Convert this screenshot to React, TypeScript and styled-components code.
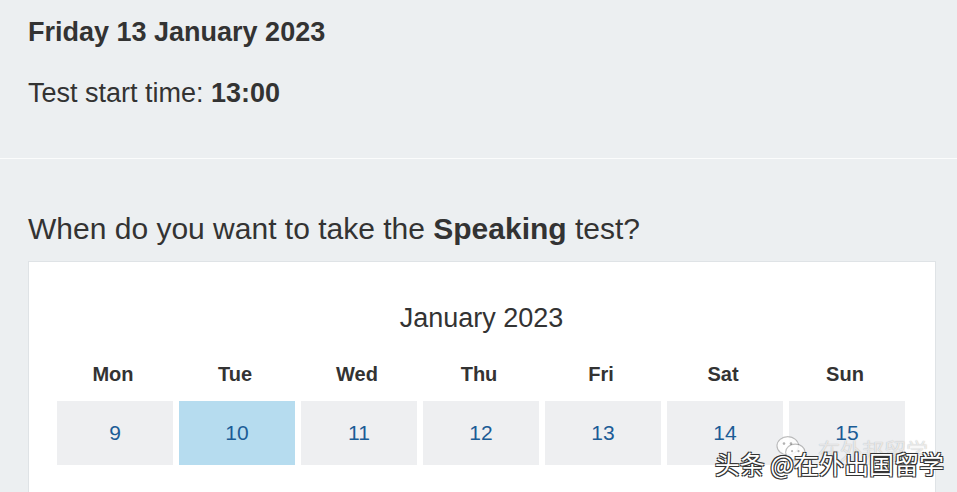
import React from "react";
import styled, { createGlobalStyle } from "styled-components";

const days = ["Mon", "Tue", "Wed", "Thu", "Fri", "Sat", "Sun"];
const dates = [9, 10, 11, 12, 13, 14, 15];
const selectedDate = 10;

const GlobalStyle = createGlobalStyle`
  html, body {
    margin: 0;
    padding: 0;
    background: #eceff1;
    font-family: "Liberation Sans", Arial, sans-serif;
    color: #333;
  }
`;

const Page = styled.div`
  position: relative;
  width: 957px;
  height: 492px;
  overflow: hidden;
  background: #eceff1;
`;

const Summary = styled.section`
  padding: 16px 28px 0;
  height: 142px;
  border-bottom: 1px solid #fbfcfc;
`;

const DateTitle = styled.h2`
  margin: 0;
  font-size: 27px;
  font-weight: bold;
  line-height: 32px;
`;

const StartTime = styled.p`
  margin: 29px 0 0;
  font-size: 27px;
  line-height: 32px;
`;

const Question = styled.h3`
  margin: 52px 28px 0;
  font-size: 30px;
  font-weight: normal;
  line-height: 36px;
`;

const CalendarCard = styled.div`
  margin: 14px 21px 0 28px;
  background: #fff;
  border: 1px solid #dfe3e6;
  padding: 40px 29px 40px 28px;
`;

const MonthTitle = styled.div`
  text-align: center;
  font-size: 27px;
  line-height: 32px;
  color: #333;
`;

const Grid = styled.div`
  display: grid;
  grid-template-columns: repeat(7, 116px);
  column-gap: 6px;
  margin-top: 26px;
`;

const DayHead = styled.div`
  text-align: center;
  font-weight: bold;
  font-size: 20px;
  line-height: 28px;
  padding: 0 4px 13px 0;
`;

const DateCell = styled.button<{ $selected?: boolean }>`
  height: 64px;
  border: none;
  padding: 0;
  background: ${(p) => (p.$selected ? "#b6dcef" : "#eeeff1")};
  color: #1b5c96;
  font-family: inherit;
  font-size: 21px;
  cursor: pointer;
`;

const Watermark = styled.div`
  position: absolute;
  right: 13px;
  bottom: 13px;
  display: flex;
  flex-direction: column;
  align-items: flex-end;
  pointer-events: none;
  font-family: "Noto Sans CJK SC", sans-serif;
`;

const WatermarkTop = styled.div`
  display: flex;
  align-items: center;
  gap: 10px;
  margin-right: 16px;
  margin-bottom: -18px;
  color: rgba(255, 255, 255, 0.7);
  font-size: 22px;
  text-shadow: 0 0 1px rgba(0, 0, 0, 0.3);
`;

const WatermarkMain = styled.div`
  color: #fff;
  font-size: 25px;
  line-height: 32px;
  text-shadow: -1px -1px 0 #333, 1px -1px 0 #333, -1px 1px 0 #333, 1px 1px 0 #333;
`;

const WeChatIcon = () => (
  <svg width="34" height="28" viewBox="0 0 30 26">
    <ellipse cx="12" cy="10" rx="10" ry="8.5" fill="rgba(255,255,255,0.8)" stroke="rgba(0,0,0,0.25)" />
    <ellipse cx="19" cy="16" rx="9" ry="7.5" fill="rgba(255,255,255,0.85)" stroke="rgba(0,0,0,0.25)" />
    <circle cx="8.5" cy="8" r="1.2" fill="rgba(0,0,0,0.3)" />
    <circle cx="15" cy="8" r="1.2" fill="rgba(0,0,0,0.3)" />
    <circle cx="16" cy="15" r="1" fill="rgba(0,0,0,0.3)" />
    <circle cx="22" cy="15" r="1" fill="rgba(0,0,0,0.3)" />
  </svg>
);

const App: React.FC = () => {
  return (
    <Page>
      <GlobalStyle />
      <Summary>
        <DateTitle>Friday 13 January 2023</DateTitle>
        <StartTime>
          Test start time: <b>13:00</b>
        </StartTime>
      </Summary>

      <Question>
        When do you want to take the <b>Speaking</b> test?
      </Question>

      <CalendarCard>
        <MonthTitle>January 2023</MonthTitle>
        <Grid>
          {days.map((d) => (
            <DayHead key={d}>{d}</DayHead>
          ))}
          {dates.map((n) => (
            <DateCell key={n} $selected={n === selectedDate}>
              {n}
            </DateCell>
          ))}
        </Grid>
      </CalendarCard>

      <Watermark>
        <WatermarkTop>
          <WeChatIcon />
          在外邦留学
        </WatermarkTop>
        <WatermarkMain>头条 @在外出国留学</WatermarkMain>
      </Watermark>
    </Page>
  );
};

export default App;
